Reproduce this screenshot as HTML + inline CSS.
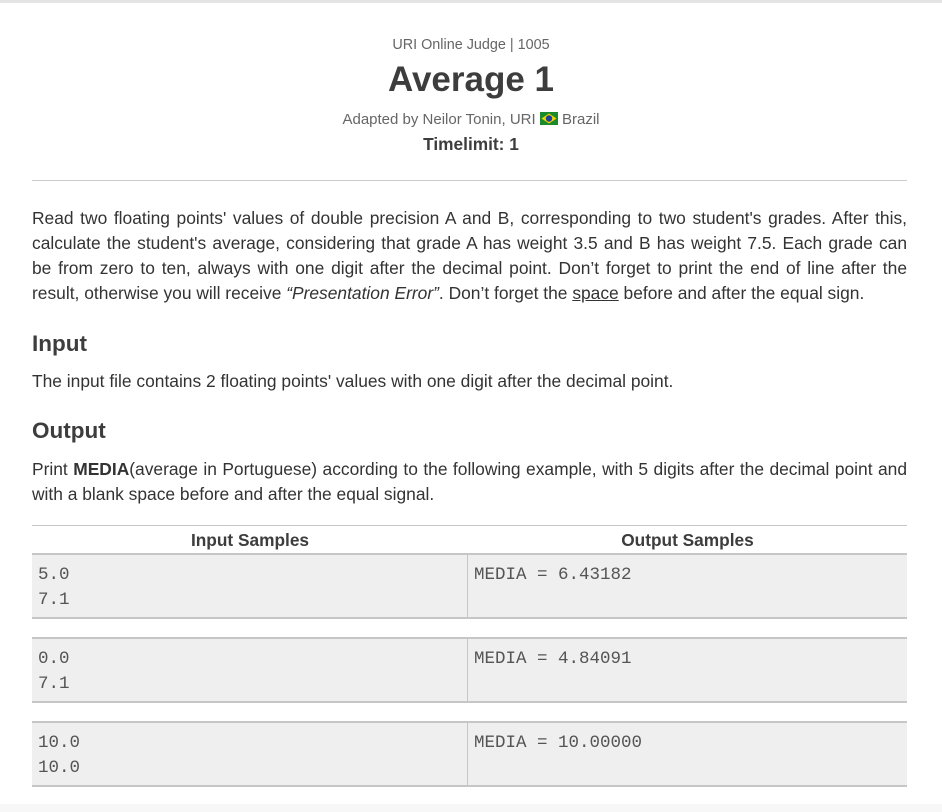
<!DOCTYPE html>
<html><head><meta charset="utf-8"><style>
body{margin:0;width:942px;height:812px;background:#fff;font-family:"Liberation Sans",Arial,sans-serif;color:#3d3d3d;position:relative;overflow:hidden}
.top{position:absolute;left:0;top:0;width:942px;height:3px;background:#e4e4e4}
.bot{position:absolute;left:0;top:804px;width:942px;height:8px;background:#f7f7f7}
.c{position:absolute;left:0;width:942px;text-align:center}
.p{position:absolute;left:32px;width:875px;font-size:17.4px;line-height:25px;text-align:justify;margin:0;color:#333}
h3{position:absolute;left:32px;margin:0;font-size:22.5px;font-weight:bold}
.hr{position:absolute;left:32px;width:875px;top:180px;height:1px;background:#ccc}
.tb{position:absolute;left:32px;width:875px}
.row{position:absolute;left:32px;width:875px;background:#efefef;border-top:2px solid #c6c6c6;border-bottom:2px solid #c6c6c6;box-sizing:border-box}
.row .d{position:absolute;left:435px;top:0;bottom:0;width:1px;background:#c6c6c6}
.m{position:absolute;font-family:"Liberation Mono","Courier New",monospace;font-size:17.5px;color:#555;line-height:25px}
</style></head><body>
<div class="top"></div>
<div class="c" style="top:37px;font-size:14.4px;color:#666">URI Online Judge | 1005</div>
<div class="c" style="top:60px;font-size:35px;font-weight:bold;color:#3d3d3d">Average 1</div>
<div class="c" style="top:111px;font-size:15px;color:#666">Adapted by Neilor Tonin, URI <svg width="18" height="13" viewBox="0 0 18 13" style="vertical-align:-1px"><rect width="18" height="13" fill="#1a8a2a"/><polygon points="9,1.5 16.5,6.5 9,11.5 1.5,6.5" fill="#f2d400"/><circle cx="9" cy="6.5" r="3.2" fill="#1c3f9a"/></svg> Brazil</div>
<div class="c" style="top:134px;font-size:17.3px;font-weight:bold">Timelimit: 1</div>
<div class="hr"></div>
<p class="p" style="top:206px">Read two floating points' values of double precision A and B, corresponding to two student's grades. After this, calculate the student's average, considering that grade A has weight 3.5 and B has weight 7.5. Each grade can be from zero to ten, always with one digit after the decimal point. Don’t forget to print the end of line after the result, otherwise you will receive <i>“Presentation Error”</i>. Don’t forget the <u>space</u> before and after the equal sign.</p>
<h3 style="top:331px">Input</h3>
<p class="p" style="top:369px">The input file contains 2 floating points' values with one digit after the decimal point.</p>
<h3 style="top:418px">Output</h3>
<p class="p" style="top:457px">Print <b>MEDIA</b>(average in Portuguese) according to the following example, with 5 digits after the decimal point and with a blank space before and after the equal signal.</p>
<div class="tb" style="top:525px;height:27px;border-top:1px solid #c6c6c6;border-bottom:2px solid #c6c6c6;font-weight:bold;font-size:17.3px">
<div style="position:absolute;left:0;width:436px;text-align:center;top:4px">Input Samples</div>
<div style="position:absolute;left:436px;width:439px;text-align:center;top:4px">Output Samples</div></div>
<div class="row" style="top:555px;height:64px;border-top:none"><div class="d"></div><div class="m" style="left:6px;top:8px">5.0<br>7.1</div><div class="m" style="left:442px;top:8px">MEDIA = 6.43182</div></div>
<div class="row" style="top:637px;height:66px"><div class="d"></div><div class="m" style="left:6px;top:8px">0.0<br>7.1</div><div class="m" style="left:442px;top:8px">MEDIA = 4.84091</div></div>
<div class="row" style="top:721px;height:66px"><div class="d"></div><div class="m" style="left:6px;top:8px">10.0<br>10.0</div><div class="m" style="left:442px;top:8px">MEDIA = 10.00000</div></div>
<div class="bot"></div>
</body></html>
